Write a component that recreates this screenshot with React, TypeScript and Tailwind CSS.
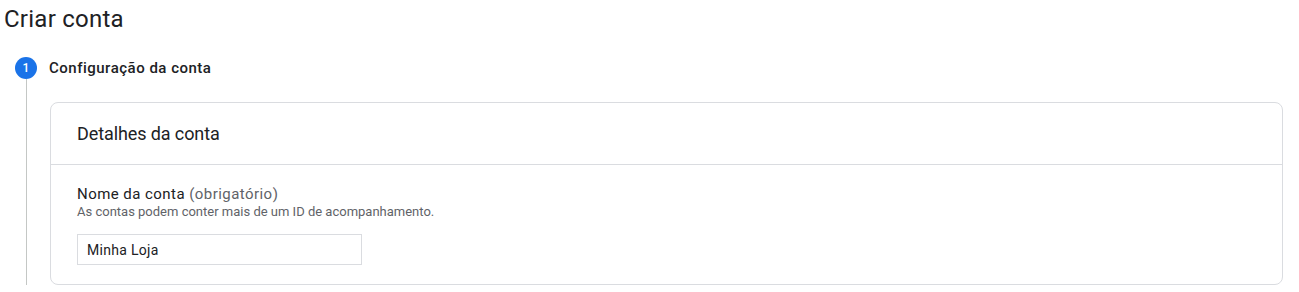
export default function App() {
  return (
    <div className="min-h-[292px] bg-white font-['Roboto',sans-serif] text-[#202124]">
      <h1 className="pl-[4px] pt-[5px] text-[24px] font-normal leading-[29px] tracking-[0.25px]">Criar conta</h1>

      {/* passo 1 */}
      <div className="mt-[23px] flex items-center pl-[15px]">
        <span className="flex h-[22px] w-[22px] items-center justify-center rounded-full bg-[#1a73e8] text-[12px] font-medium text-white">
          1
        </span>
        <span className="ml-[12px] text-[15px] font-medium leading-5 tracking-[0.5px]">
          Configuração da conta
        </span>
      </div>

      <div className="flex pb-[8px] pr-[16px]">
        <div className="ml-[26px] w-px shrink-0 bg-[#c4c7c5]" />
        <section className="ml-[23px] mt-[23px] flex-1 rounded-lg border border-[#dadce0]">
          <div className="flex h-[62px] items-center border-b border-[#dadce0] px-[26px] text-[18px] tracking-[-0.1px]">
            Detalhes da conta
          </div>
          <div className="px-[26px] pb-[19px] pt-[19px]">
            <p className="text-[15px] leading-5 tracking-[0.45px]">
              Nome da conta <span className="text-[#5f6368]">(obrigatório)</span>
            </p>
            <p className="text-[13px] leading-4 text-[#5f6368]">
              As contas podem conter mais de um ID de acompanhamento.
            </p>
            <input
              type="text"
              defaultValue="Minha Loja"
              className="mt-[14px] h-[31px] w-[285px] border border-[#dadce0] px-[9px] text-[14px] tracking-[0.3px] text-[#202124] outline-none"
            />
          </div>
        </section>
      </div>
    </div>
  );
}
